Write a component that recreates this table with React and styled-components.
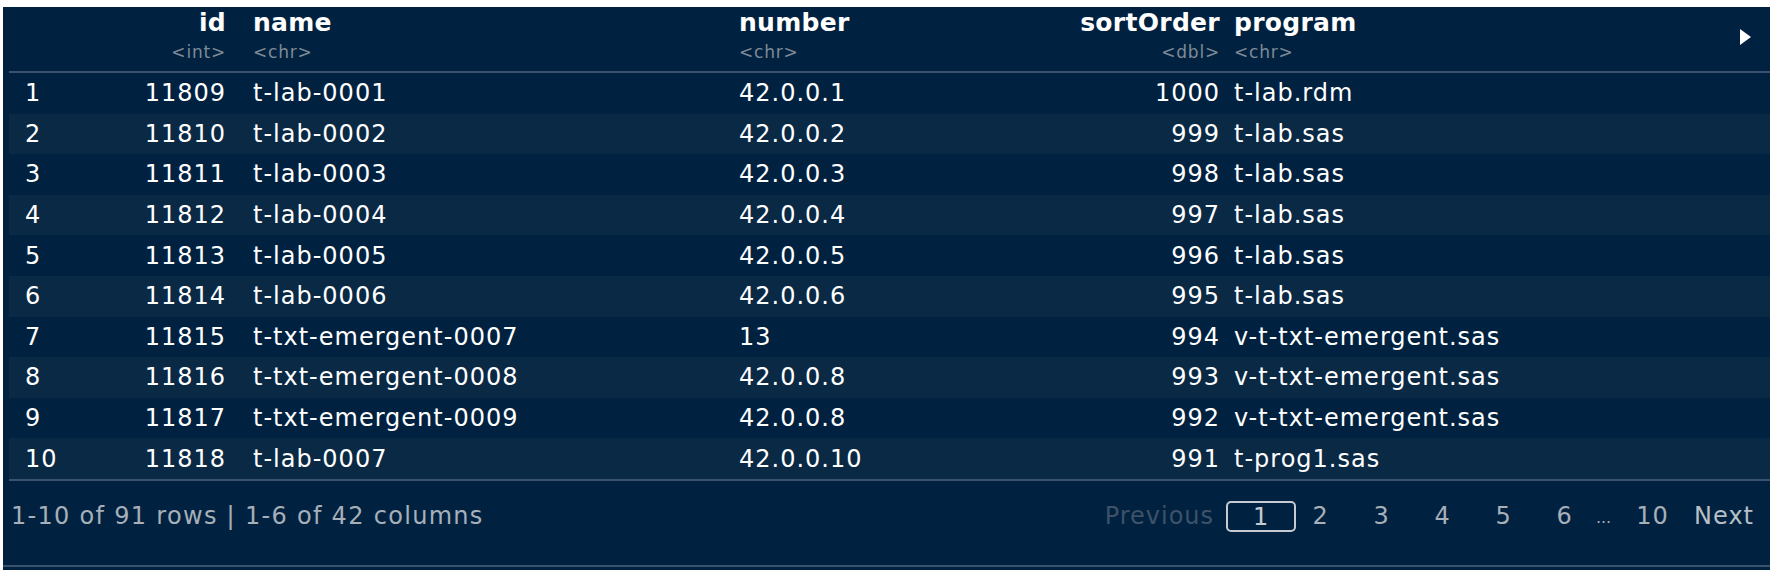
import React from 'react';
import styled, { createGlobalStyle } from 'styled-components';

const Global = createGlobalStyle`
  html, body { margin: 0; padding: 0; background: #ffffff; }
  body { font-family: "DejaVu Sans", Verdana, sans-serif; }
`;

const Page = styled.div`
  padding: 7px 4px 0 3px;
`;

const Panel = styled.div`
  background: #002240;
  height: 563px;
  display: flex;
  flex-direction: column;
  overflow: hidden;
`;

const COLS = '96px 105px 513px 380px 101px 1fr auto';

const Table = styled.div`
  margin-left: 6px;
  display: flex;
  flex-direction: column;
  border-bottom: 2px solid #3a526b;
`;

const HeadRow = styled.div`
  display: grid;
  grid-template-columns: ${COLS};
  padding: 2px 14px 10px 16px;
  border-bottom: 2px solid #3a526b;
`;

const HeadCell = styled.div`
  display: flex;
  flex-direction: column;
  align-items: ${(p) => (p.$right ? 'flex-end' : 'flex-start')};
  padding-left: ${(p) => p.$pad || 0}px;
`;

const ColName = styled.span`
  font-weight: bold;
  font-size: 25px;
  line-height: 28px;
  letter-spacing: 0.3px;
  color: #ffffff;
  white-space: nowrap;
`;

const ColType = styled.span`
  font-size: 17px;
  line-height: 18px;
  margin-top: 6px;
  letter-spacing: 0.8px;
  color: #7f8a97;
  white-space: nowrap;
`;

const MoreArrow = styled.div`
  align-self: start;
  margin-top: 20px;
  margin-right: 5px;
  width: 0;
  height: 0;
  border-top: 8px solid transparent;
  border-bottom: 8px solid transparent;
  border-left: 11px solid #ffffff;
`;

const Row = styled.div`
  display: grid;
  grid-template-columns: ${COLS};
  align-items: center;
  height: 40.6px;
  padding-left: 16px;
  background: ${(p) => (p.$striped ? '#0a2945' : 'transparent')};
`;

const Cell = styled.div`
  font-size: 24px;
  letter-spacing: 1px;
  color: #ffffff;
  white-space: nowrap;
  text-align: ${(p) => (p.$right ? 'right' : 'left')};
  padding-left: ${(p) => p.$pad || 0}px;
`;

const Footer = styled.div`
  box-sizing: border-box;
  height: 86px;
  display: flex;
  align-items: center;
  justify-content: space-between;
  padding: 0 16px 14px 8px;
  border-bottom: 2px solid #3a526b;
`;

const Info = styled.span`
  font-size: 24px;
  letter-spacing: 1.3px;
  color: #a7afb8;
`;

const Pager = styled.div`
  display: flex;
  align-items: center;
  font-size: 24px;
  letter-spacing: 1px;
`;

const PrevBtn = styled.span`
  color: #3d5268;
  margin-right: 12px;
`;

const CurrentBtn = styled.span`
  box-sizing: border-box;
  width: 70px;
  height: 31px;
  display: flex;
  align-items: center;
  justify-content: center;
  border: 2px solid #c6cbd0;
  border-radius: 5px;
  color: #c6cbd0;
  margin-top: 2px;
  margin-right: -6px;
`;

const PageNum = styled.span`
  width: 61px;
  text-align: center;
  color: #a7afb8;
`;

const Ellipsis = styled.span`
  width: 17px;
  margin-right: 10px;
  text-align: center;
  color: #a7afb8;
  font-size: 16px;
  letter-spacing: 0;
  align-self: flex-end;
  margin-bottom: 5px;
`;

const NextBtn = styled.span`
  color: #b8bfc6;
  margin-left: 11px;
`;

const columns = [
  { key: 'id', type: 'int', right: true },
  { key: 'name', type: 'chr', pad: 27 },
  { key: 'number', type: 'chr' },
  { key: 'sortOrder', type: 'dbl', right: true },
  { key: 'program', type: 'chr', pad: 14 },
];

const rows = [
  [11809, 't-lab-0001', '42.0.0.1', 1000, 't-lab.rdm'],
  [11810, 't-lab-0002', '42.0.0.2', 999, 't-lab.sas'],
  [11811, 't-lab-0003', '42.0.0.3', 998, 't-lab.sas'],
  [11812, 't-lab-0004', '42.0.0.4', 997, 't-lab.sas'],
  [11813, 't-lab-0005', '42.0.0.5', 996, 't-lab.sas'],
  [11814, 't-lab-0006', '42.0.0.6', 995, 't-lab.sas'],
  [11815, 't-txt-emergent-0007', '13', 994, 'v-t-txt-emergent.sas'],
  [11816, 't-txt-emergent-0008', '42.0.0.8', 993, 'v-t-txt-emergent.sas'],
  [11817, 't-txt-emergent-0009', '42.0.0.8', 992, 'v-t-txt-emergent.sas'],
  [11818, 't-lab-0007', '42.0.0.10', 991, 't-prog1.sas'],
];

export default function App() {
  return (
    <Page>
      <Global />
      <Panel>
        <Table>
          <HeadRow>
            <HeadCell />
            {columns.map((c) => (
              <HeadCell key={c.key} $right={c.right} $pad={c.pad}>
                <ColName>{c.key}</ColName>
                <ColType>&lt;{c.type}&gt;</ColType>
              </HeadCell>
            ))}
            <MoreArrow />
          </HeadRow>
          {rows.map((r, i) => (
            <Row key={i} $striped={i % 2 === 1}>
              <Cell>{i + 1}</Cell>
              {r.map((v, j) => (
                <Cell key={j} $right={columns[j].right} $pad={columns[j].pad}>
                  {v}
                </Cell>
              ))}
            </Row>
          ))}
        </Table>
        <Footer>
          <Info>1-10 of 91 rows | 1-6 of 42 columns</Info>
          <Pager>
            <PrevBtn>Previous</PrevBtn>
            <CurrentBtn>1</CurrentBtn>
            <PageNum>2</PageNum>
            <PageNum>3</PageNum>
            <PageNum>4</PageNum>
            <PageNum>5</PageNum>
            <PageNum>6</PageNum>
            <Ellipsis>...</Ellipsis>
            <PageNum>10</PageNum>
            <NextBtn>Next</NextBtn>
          </Pager>
        </Footer>
      </Panel>
    </Page>
  );
}
